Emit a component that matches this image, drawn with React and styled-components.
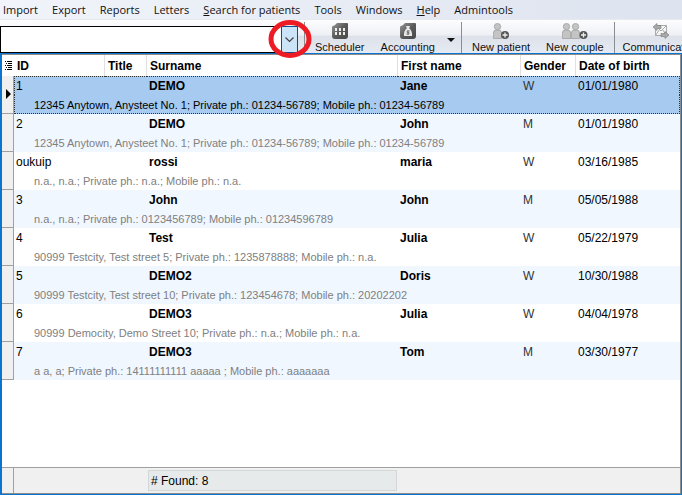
import React from "react";
import styled, { createGlobalStyle } from "styled-components";

const GlobalStyle = createGlobalStyle`
  * {
    box-sizing: border-box;
  }
  body {
    margin: 0;
    background: #fff;
    font-family: "Liberation Sans", Arial, sans-serif;
    color: #000;
  }
`;

const Page = styled.div`
  display: flex;
  flex-direction: column;
  min-height: 100vh;
  overflow: hidden;
`;

const MenuBar = styled.nav`
  display: flex;
  align-items: center;
  gap: 14px;
  height: 19px;
  padding-left: 3px;
  background: linear-gradient(90deg, #f1f4fa, #dde3ef);
`;

const MenuButton = styled.button`
  padding: 0;
  border: 0;
  background: none;
  color: #111;
  font: 11px/18px "Open Sans", "Noto Sans", sans-serif;
  white-space: nowrap;
`;

const ToolBar = styled.div`
  display: flex;
  height: 34px;
  padding-top: 2px;
  border-top: 1px solid #e6e9ee;
  background: linear-gradient(#fdfdfe, #eef0f5 45%, #dde1ea 50%, #e6eaf2);
`;

const SearchBox = styled.div`
  display: flex;
  flex: 0 0 298px;
  height: 27px;
  margin-top: 4px;
  position: relative;
`;

const SearchInput = styled.input`
  flex: 1;
  min-width: 0;
  padding: 0 6px;
  border: 1px solid #000;
  border-right: 0;
  background: #fff;
  font: 12px "Liberation Sans", Arial, sans-serif;
  outline: none;
`;

const DropButton = styled.button`
  display: flex;
  align-items: center;
  justify-content: center;
  width: 17px;
  padding: 0;
  border: 1px solid #0a4f91;
  background: #cce4f7;
`;

const Marker = styled.svg`
  position: absolute;
  right: -14px;
  top: -7px;
  pointer-events: none;
`;

const Divider = styled.div`
  flex: none;
  width: 1px;
  margin-left: ${(p) => p.$gap}px;
  background: #8a8d93;
`;

const ToolButton = styled.button`
  display: flex;
  flex: none;
  flex-direction: column;
  align-items: center;
  margin-left: ${(p) => p.$gap}px;
  padding: 1px 0 0;
  border: 0;
  background: none;
  color: #111;
  font: 11px/16px "Liberation Sans", Arial, sans-serif;
  white-space: nowrap;
  svg {
    flex: none;
  }
`;

const MoreButton = styled.button`
  flex: none;
  width: 8px;
  margin-left: 12px;
  padding: 0;
  border: 0;
  background: none;
`;

const Panel = styled.main`
  display: flex;
  flex: 1;
  flex-direction: column;
  border: 1px solid #0a74d0;
  border-left-width: 2px;
  background: #fff;
`;

const GridFrame = styled.div`
  display: flex;
  flex: 1;
  flex-direction: column;
  border: 1px solid #8c8c8c;
  border-left: 0;
`;

const Grid = styled.table`
  width: 100%;
  table-layout: fixed;
  border-collapse: separate;
  border-spacing: 0;
  font-size: 12px;
`;

const HeadCell = styled.th`
  height: 21px;
  padding: 0 0 0 3px;
  border-right: 1px solid #e0e0e0;
  font-weight: bold;
  line-height: 20px;
  text-align: left;
  white-space: nowrap;
  &:last-child {
    border-right: 0;
  }
`;

const ListCell = styled(HeadCell)`
  border-right: 0;
  svg {
    display: block;
  }
`;

const Selector = styled.td`
  padding: 0 0 0 4px;
  border-right: 1px solid #a0a0a0;
  border-bottom: 1px solid #a0a0a0;
  background: #f0f0f0;
`;

const edge = (p) => (p.$selected ? "1px dotted #333" : "1px solid transparent");

const Patient = styled.tbody`
  background: ${(p) => (p.$selected ? "#a6caf0" : p.$shaded ? "#f0f7ff" : "#fff")};
`;

const Cell = styled.td`
  height: 19px;
  padding: 1px 0 0 2px;
  border-top: ${edge};
  color: ${(p) => (p.$dim ? "#333" : "#000")};
  font-weight: ${(p) => (p.$bold ? "bold" : "normal")};
  line-height: 17px;
  white-space: nowrap;
  &:nth-child(2) {
    padding-left: 1px;
    border-left: ${edge};
  }
  &:last-child {
    border-right: ${edge};
  }
`;

const Details = styled.td`
  height: 19px;
  padding: 2px 0 0 19px;
  border: ${edge};
  border-top: 0;
  color: ${(p) => (p.$selected ? "#000" : "#808080")};
  font-size: 11px;
  line-height: 16px;
  white-space: nowrap;
`;

const Footer = styled.footer`
  display: flex;
  height: 26px;
  margin-top: auto;
  border-top: 1px solid #a0a0a0;
  background: #f0f0f0;
`;

const FooterEdge = styled.div`
  width: 12px;
  border-right: 1px solid #a0a0a0;
`;

const Found = styled.output`
  width: 249px;
  height: 21px;
  margin: 2px 0 0 134px;
  padding-left: 2px;
  border: 1px solid #d4d7d8;
  background: #e6eaeb;
  font-size: 12px;
  line-height: 20px;
`;

const menus = [
  ["Import"],
  ["Export"],
  ["Reports"],
  ["Letters"],
  ["Search for patients", true],
  ["Tools"],
  ["Windows"],
  ["Help", true],
  ["Admintools"],
];

const patients = [
  { id: "1", surname: "DEMO", first: "Jane", gender: "W", birth: "01/01/1980", details: "12345 Anytown, Anysteet No. 1; Private ph.: 01234-56789; Mobile ph.: 01234-56789" },
  { id: "2", surname: "DEMO", first: "John", gender: "M", birth: "01/01/1980", details: "12345 Anytown, Anysteet No. 1; Private ph.: 01234-56789; Mobile ph.: 01234-56789" },
  { id: "oukuip", surname: "rossi", first: "maria", gender: "W", birth: "03/16/1985", details: "n.a., n.a.; Private ph.: n.a.; Mobile ph.: n.a." },
  { id: "3", surname: "John", first: "John", gender: "M", birth: "05/05/1988", details: "n.a., n.a.; Private ph.: 0123456789; Mobile ph.: 01234596789" },
  { id: "4", surname: "Test", first: "Julia", gender: "W", birth: "05/22/1979", details: "90999 Testcity, Test street 5; Private ph.: 1235878888; Mobile ph.: n.a." },
  { id: "5", surname: "DEMO2", first: "Doris", gender: "W", birth: "10/30/1988", details: "90999 Testcity, Test street 10; Private ph.: 123454678; Mobile ph.: 20202202" },
  { id: "6", surname: "DEMO3", first: "Julia", gender: "W", birth: "04/04/1978", details: "90999 Democity, Demo Street 10; Private ph.: n.a.; Mobile ph.: n.a." },
  { id: "7", surname: "DEMO3", first: "Tom", gender: "M", birth: "03/30/1977", details: "a a, a; Private ph.: 14111111111 aaaaa ; Mobile ph.: aaaaaaa" },
];

const FolderShape = ({ id }) => (
  <>
    <linearGradient id={id} x1="0" y1="0" x2="1" y2="1">
      <stop offset="0" stopColor="#999" />
      <stop offset="0.5" stopColor="#5a5a5a" />
      <stop offset="1" stopColor="#484848" />
    </linearGradient>
    <path d="M0 4q0-1 1-1l2-1 2-2h10q1 0 1 1v12q0 3-3 3H3q-3 0-3-3z" fill={`url(#${id})`} />
  </>
);

const SchedulerIcon = () => (
  <svg width="16" height="16" viewBox="0 0 16 16">
    <FolderShape id="scheduler" />
    <path d="M3 5h2v3H3zM7 5h2v3H7zM11 5h2v3h-2zM3 9h2v3H3zM7 9h2v3H7zM11 9h2v3h-2z" fill="#eee" />
  </svg>
);

const AccountingIcon = () => (
  <svg width="16" height="16" viewBox="0 0 16 16">
    <FolderShape id="accounting" />
    <path d="M6 3h4L9.200 5.200Q12.500 8 12 13H4Q3.500 8 6.800 5.200z" fill="#e8e8e8" />
    <path d="M9.700 8H7.200v1.500h1.800v1.600H6.400M8 7v5" fill="none" stroke="#666" strokeWidth="0.8" />
  </svg>
);

const Person = ({ x = 0 }) => (
  <g transform={`translate(${x} 0)`} fill="#c4c4c4" stroke="#999" strokeWidth="0.7">
    <path d="M.4 15.500V10q0-3 3-3h2.200q3 0 3 3v5.500z" />
    <circle cx="4.500" cy="3.600" r="3.200" />
  </g>
);

const Plus = ({ x }) => (
  <g transform={`translate(${x} 12)`}>
    <circle r="4" fill="#555" />
    <path d="M-2.500 0h5M0-2.500v5" stroke="#eee" strokeWidth="1.300" />
  </g>
);

const PatientIcon = () => (
  <svg width="16" height="16" viewBox="0 0 16 16">
    <Person />
    <Plus x={12} />
  </svg>
);

const CoupleIcon = () => (
  <svg width="26" height="16" viewBox="0 0 26 16">
    <Person />
    <Person x={9} />
    <Plus x={21.5} />
  </svg>
);

const MailIcon = () => (
  <svg width="18" height="16" viewBox="0 0 18 16">
    <path d="M3.500 2.500h11v10h-11zM3.500 2.500l5.500 5.500 5.500-5.500M3.500 12.500l4-6M14.500 12.500l-4-6" fill="#f5f5f5" stroke="#aaa" />
    <path d="M1 4l4-3.500v2h4v3H5v2zM17 12l-4-3.500v2H9v3h4v2z" fill="#aaa" stroke="#777" strokeWidth="0.6" />
  </svg>
);

const App = () => {
  return (
    <Page>
      <GlobalStyle />
      <MenuBar>
        {menus.map(([name, marked]) => (
          <MenuButton key={name}>
            {marked ? <u>{name[0]}</u> : name[0]}
            {name.slice(1)}
          </MenuButton>
        ))}
      </MenuBar>
      <ToolBar>
        <SearchBox>
          <SearchInput aria-label="Search patient" />
          <DropButton aria-label="Show list">
            <svg width="9" height="6" viewBox="0 0 9 6">
              <path d="M.5 .5l4 4 4-4" fill="none" stroke="#444" strokeWidth="1.200" />
            </svg>
          </DropButton>
          <Marker width="44" height="40" viewBox="0 0 44 40">
            <ellipse cx="22" cy="20" rx="19" ry="16.500" fill="none" stroke="#ed1c24" strokeWidth="5" />
          </Marker>
        </SearchBox>
        <Divider $gap={6} />
        <ToolButton $gap={10}>
          <SchedulerIcon />
          Scheduler
        </ToolButton>
        <ToolButton $gap={16}>
          <AccountingIcon />
          Accounting
        </ToolButton>
        <MoreButton aria-label="More">
          <svg width="8" height="4" viewBox="0 0 8 4">
            <path d="M0 0h8L4 4z" fill="#111" />
          </svg>
        </MoreButton>
        <Divider $gap={6} />
        <ToolButton $gap={10}>
          <PatientIcon />
          New patient
        </ToolButton>
        <ToolButton $gap={16}>
          <CoupleIcon />
          New couple
        </ToolButton>
        <Divider $gap={10} />
        <ToolButton $gap={8}>
          <MailIcon />
          Communication
        </ToolButton>
      </ToolBar>
      <Panel>
        <GridFrame>
          <Grid>
            <colgroup>
              <col style={{ width: 12 }} />
              <col style={{ width: 91 }} />
              <col style={{ width: 42 }} />
              <col style={{ width: 251 }} />
              <col style={{ width: 123 }} />
              <col style={{ width: 55 }} />
              <col />
            </colgroup>
            <thead>
              <tr>
                <ListCell aria-label="Columns">
                  <svg width="8" height="9" viewBox="0 0 8 9">
                    <path d="M0 .5h1M2 .5h5M1 2.500h1M3 2.500h4M0 4.500h1M2 4.500h5M1 6.500h1M3 6.500h4M0 8.500h1M2 8.500h5" stroke="#000" />
                  </svg>
                </ListCell>
                <HeadCell>ID</HeadCell>
                <HeadCell>Title</HeadCell>
                <HeadCell>Surname</HeadCell>
                <HeadCell>First name</HeadCell>
                <HeadCell>Gender</HeadCell>
                <HeadCell>Date of birth</HeadCell>
              </tr>
            </thead>
            {patients.map((p, i) => {
              const selected = i === 0;
              return (
                <Patient key={p.id} $selected={selected} $shaded={i % 2 === 1}>
                  <tr>
                    <Selector rowSpan={2}>
                      {selected && (
                        <svg width="6" height="10" viewBox="0 0 6 10">
                          <path d="M0 0l5 5-5 5z" />
                        </svg>
                      )}
                    </Selector>
                    <Cell $selected={selected}>{p.id}</Cell>
                    <Cell $selected={selected} />
                    <Cell $selected={selected} $bold>{p.surname}</Cell>
                    <Cell $selected={selected} $bold>{p.first}</Cell>
                    <Cell $selected={selected} $dim>{p.gender}</Cell>
                    <Cell $selected={selected}>{p.birth}</Cell>
                  </tr>
                  <tr>
                    <Details colSpan={6} $selected={selected}>
                      {p.details}
                    </Details>
                  </tr>
                </Patient>
              );
            })}
          </Grid>
          <Footer>
            <FooterEdge />
            <Found># Found: 8</Found>
          </Footer>
        </GridFrame>
      </Panel>
    </Page>
  );
};

export default App;
